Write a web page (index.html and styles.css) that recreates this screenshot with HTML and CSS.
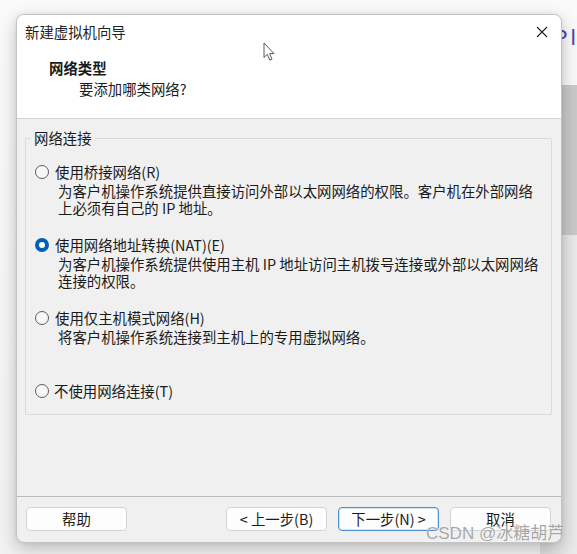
FILE: index.html
```html
<!DOCTYPE html>
<html lang="zh-CN">
<head>
<meta charset="utf-8">
<title>新建虚拟机向导</title>
<link rel="stylesheet" href="styles.css">
</head>
<body>
<div class="desktop">
  <div class="backdrop-text">Pl</div>
  <div class="backdrop-panel"></div>
  <div class="backdrop-panel-lower"></div>

  <div class="dialog">
    <div class="top">
      <div class="titlebar">
        <span class="title">新建虚拟机向导</span>
        <svg class="close" width="12" height="12" viewBox="0 0 12 12"><path d="M1 1 L11 11 M11 1 L1 11" stroke="#1f1f1f" stroke-width="1.1" fill="none"/></svg>
      </div>
      <div class="header">
        <div class="header-title">网络类型</div>
        <div class="header-sub">要添加哪类网络?</div>
      </div>
    </div>

    <div class="content">
      <fieldset class="group">
        <legend>网络连接</legend>
        <div class="option first">
          <div class="opt-row"><span class="radio"></span><span>使用桥接网络(R)</span></div>
          <div class="desc">为客户机操作系统提供直接访问外部以太网网络的权限。客户机在外部网络<br>上必须有自己的 IP 地址。</div>
        </div>
        <div class="option">
          <div class="opt-row"><span class="radio checked"></span><span>使用网络地址转换(NAT)(E)</span></div>
          <div class="desc">为客户机操作系统提供使用主机 IP 地址访问主机拨号连接或外部以太网网络<br>连接的权限。</div>
        </div>
        <div class="option">
          <div class="opt-row"><span class="radio"></span><span>使用仅主机模式网络(H)</span></div>
          <div class="desc">将客户机操作系统连接到主机上的专用虚拟网络。</div>
        </div>
        <div class="option last">
          <div class="opt-row"><span class="radio"></span><span class="tight">不使用网络连接(T)</span></div>
        </div>
      </fieldset>
    </div>

    <div class="footer">
      <button class="btn">帮助</button>
      <button class="btn push">&lt; 上一步(B)</button>
      <button class="btn focused">下一步(N) &gt;</button>
      <button class="btn">取消</button>
    </div>
  </div>

  <svg class="cursor" width="13" height="20" viewBox="0 0 13 20"><path d="M1 1 L1 15.5 L4.3 12.4 L6.8 18.2 L9 17.2 L6.6 11.6 L11 11.6 Z" fill="#ffffff" stroke="#5a5a5a" stroke-width="1" stroke-linejoin="round"/></svg>

  <div class="watermark">CSDN @冰糖胡芦</div>
</div>
</body>
</html>
```

FILE: styles.css
```css
html, body {
  margin: 0;
  padding: 0;
}

body {
  width: 577px;
  height: 554px;
  overflow: hidden;
  background: #f6f6f6;
  font-family: "Noto Sans CJK SC", "Noto Sans", sans-serif;
  font-size: 14.4px;
  color: #1b1b1b;
}

.desktop {
  position: relative;
  width: 577px;
  height: 554px;
  padding: 14px 0 0 16px;
  box-sizing: border-box;
  background: linear-gradient(#fafafa, #f2f2f2);
}

.backdrop-text {
  position: absolute;
  left: 553px;
  top: 25px;
  font-family: "Liberation Sans", sans-serif;
  font-size: 22px;
  color: #4c43bd;
  letter-spacing: 3px;
}

.backdrop-panel {
  position: absolute;
  left: 540px;
  top: 85px;
  width: 37px;
  height: 150px;
  background: #c9c9c9;
}

.backdrop-panel-lower {
  position: absolute;
  left: 540px;
  top: 235px;
  width: 37px;
  height: 319px;
  background: linear-gradient(90deg, #dcdcdc, #ebebeb);
}

.dialog {
  position: relative;
  width: 546px;
  height: 529px;
  box-sizing: border-box;
  border: 1px solid #c4c4c4;
  border-radius: 8px;
  background: #f0f0f0;
  box-shadow: 0 6px 18px rgba(0, 0, 0, 0.22), 0 0 4px rgba(0, 0, 0, 0.08);
  display: flex;
  flex-direction: column;
  overflow: hidden;
}

.top {
  background: #ffffff;
  border-bottom: 1px solid #d2d2d2;
}

.titlebar {
  height: 34px;
  display: flex;
  align-items: center;
  justify-content: space-between;
  padding: 0 13px 0 8px;
}

.title {
  line-height: 20px;
  color: #1f1f1f;
}

.close {
  display: block;
}

.header {
  padding: 8px 0 19px 32px;
}

.header-title {
  font-weight: bold;
  line-height: 21px;
}

.header-sub {
  line-height: 21px;
  padding-left: 30px;
}

.content {
  flex: 1;
  padding: 9px 9px 0 8px;
}

.group {
  margin: 0;
  padding: 0 0 13px 9px;
  border: 1px solid #dadada;
  border-radius: 2px;
}

.group legend {
  margin-left: -4px;
  padding: 0 3px;
  line-height: 20px;
}

.option {
  margin-top: 19px;
}

.option.first {
  margin-top: 14px;
}

.option.last {
  margin-top: 36px;
}

.opt-row {
  display: flex;
  align-items: center;
  line-height: 20px;
  gap: 6px;
}

.radio {
  width: 14px;
  height: 14px;
  box-sizing: border-box;
  border: 1px solid #5c5c5c;
  border-radius: 50%;
  background: #f7f7f7;
  flex: none;
}

.radio.checked {
  border: 4px solid #0060b8;
  background: #ffffff;
}

.tight {
  margin-left: -1px;
}

.desc {
  padding-left: 23px;
  line-height: 17px;
}

.footer {
  height: 46px;
  box-sizing: border-box;
  border-top: 1px solid #b9b9b9;
  padding: 10px 10px 0 9px;
  display: flex;
  align-items: flex-start;
  gap: 11px;
}

.btn {
  width: 101px;
  height: 24px;
  box-sizing: border-box;
  border: 1px solid #d3d3d3;
  border-radius: 4px;
  background: #fdfdfd;
  font-family: "Noto Sans CJK SC", "Noto Sans", sans-serif;
  font-size: 14.4px;
  line-height: 20px;
  color: #1b1b1b;
  padding: 0;
}

.btn.push {
  margin-left: auto;
}

.btn.focused {
  border: 1px solid #4c8fd0;
  box-shadow: inset 0 0 0 1px #d6e6f6;
}

.cursor {
  position: absolute;
  left: 263px;
  top: 42px;
}

.watermark {
  position: absolute;
  left: 426px;
  top: 523px;
  font-family: "Liberation Sans", "Noto Sans CJK SC", sans-serif;
  font-size: 17px;
  line-height: 22px;
  color: rgba(150, 150, 150, 0.85);
  text-shadow: 0 0 1px #ffffff;
}
```
